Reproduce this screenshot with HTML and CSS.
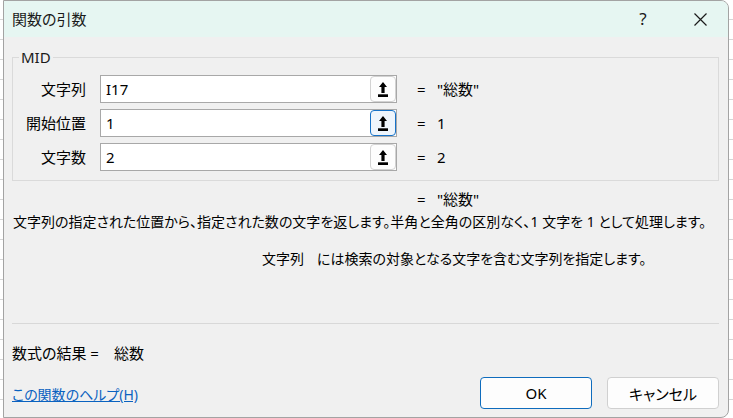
FILE: index.html
```html
<!DOCTYPE html>
<html lang="ja">

<head>
  <meta charset="UTF-8">
  <meta name="viewport" content="width=device-width, initial-scale=1.0">
  <title>関数の引数</title>
  <link rel="stylesheet" href="styles.css">
</head>

<body>
  <div class="dialog">
    <div class="titlebar">
      <span class="title">関数の引数</span>
      <span class="help">?</span>
      <span class="close">
        <svg width="13" height="13" viewBox="0 0 13 13"><path d="M0.5 0.5 L12.5 12.5 M12.5 0.5 L0.5 12.5" stroke="#1b1b1b" stroke-width="1.2" fill="none"/></svg>
      </span>
    </div>

    <div class="content">
      <fieldset class="group">
        <legend>MID</legend>
        <div class="arg-row">
          <label>文字列</label>
          <div class="ref-input"><span class="value">I17</span><button class="pick"><svg width="10" height="15" viewBox="0 0 10 15"><path d="M5 0 L9 5 L6.6 5 L6.6 11 L3.4 11 L3.4 5 L1 5 Z" fill="#000"/><rect x="0" y="12.3" width="10" height="2.7" fill="#000"/></svg></button></div>
          <span class="eq">=</span>
          <span class="result">"総数"</span>
        </div>
        <div class="arg-row">
          <label>開始位置</label>
          <div class="ref-input"><span class="value">1</span><button class="pick focused"><svg width="10" height="15" viewBox="0 0 10 15"><path d="M5 0 L9 5 L6.6 5 L6.6 11 L3.4 11 L3.4 5 L1 5 Z" fill="#000"/><rect x="0" y="12.3" width="10" height="2.7" fill="#000"/></svg></button></div>
          <span class="eq">=</span>
          <span class="result">1</span>
        </div>
        <div class="arg-row">
          <label>文字数</label>
          <div class="ref-input"><span class="value">2</span><button class="pick"><svg width="10" height="15" viewBox="0 0 10 15"><path d="M5 0 L9 5 L6.6 5 L6.6 11 L3.4 11 L3.4 5 L1 5 Z" fill="#000"/><rect x="0" y="12.3" width="10" height="2.7" fill="#000"/></svg></button></div>
          <span class="eq">=</span>
          <span class="result">2</span>
        </div>
      </fieldset>

      <div class="arg-row total">
        <span></span>
        <span></span>
        <span class="eq">=</span>
        <span class="result">"総数"</span>
      </div>

      <p class="desc">文字列の指定された位置から、指定された数の文字を返します。半角と全角の区別なく、1 文字を 1 として処理します。</p>
      <p class="arg-desc"><span class="arg-name">文字列</span>には検索の対象となる文字を含む文字列を指定します。</p>

      <hr>

      <div class="formula-result">数式の結果 =<span class="formula-value">総数</span></div>

      <div class="footer">
        <a href="#" class="help-link">この関数のヘルプ(H)</a>
        <div class="buttons">
          <button class="btn primary">OK</button>
          <button class="btn">キャンセル</button>
        </div>
      </div>
    </div>
  </div>
</body>

</html>
```

FILE: styles.css
```css
body {
  margin: 0;
  height: 418px;
  overflow: hidden;
  background: #fff repeating-linear-gradient(to bottom, #fff 0, #fff 19px, #d6d6d6 19px, #d6d6d6 20px);
  font-family: "Noto Sans", "Noto Sans CJK JP", sans-serif;
  font-feature-settings: "palt";
  font-size: 15px;
  line-height: 20px;
  color: #000;
}

.dialog {
  margin-left: 3px;
  width: 726px;
  height: 418px;
  box-sizing: border-box;
  border: 1px solid #a3a3a3;
  border-radius: 0 8px 8px 0;
  background: #f0f0f0;
  overflow: hidden;
}

.titlebar {
  height: 36px;
  display: flex;
  align-items: center;
  padding: 0 5px 0 8px;
  background: #e6f6f2;
  color: #1a1a1a;
}

.titlebar .title {
  flex: 1;
}

.titlebar .help,
.titlebar .close {
  width: 46px;
  display: flex;
  justify-content: center;
  align-items: center;
}

.titlebar .help {
  font-size: 17px;
  margin-right: 11px;
}

.content {
  padding: 10px 9px 0 8px;
}

.group {
  margin: 0;
  padding: 8px 0 9px 0;
  border: 1px solid #dadada;
}

.group legend {
  margin-left: 6px;
  padding: 0 2px;
  color: #1a1a1a;
}

.arg-row {
  display: grid;
  grid-template-columns: 87px 317px 20px 1fr;
  align-items: center;
  height: 28px;
}

.arg-row + .arg-row {
  margin-top: 6px;
}

.arg-row label {
  text-align: right;
  padding-right: 14px;
}

.ref-input {
  width: 297px;
  height: 28px;
  box-sizing: border-box;
  border: 1px solid #a8a8a8;
  background: #fff;
  display: flex;
  align-items: center;
}

.ref-input .value {
  flex: 1;
  padding-left: 5px;
}

.pick {
  width: 26px;
  height: 26px;
  box-sizing: border-box;
  padding: 0;
  border: 1px solid #d2d2d2;
  border-radius: 4px;
  background: #fdfdfd;
  display: flex;
  justify-content: center;
  align-items: center;
}

.pick.focused {
  border: 1.5px solid #1672c8;
  background: #eef5fc;
}

.arg-row.total {
  margin: 8px 0 0 1px;
  height: 20px;
}

.desc {
  margin: 3px 0 0 1px;
  font-size: 14px;
  white-space: nowrap;
}

.arg-desc {
  margin: 17px 0 0 250px;
  font-size: 14px;
  white-space: nowrap;
}

.arg-name {
  margin-right: 13px;
}

hr {
  margin: 54px 0 0 0;
  border: 0;
  border-top: 1px solid #d8d8d8;
}

.formula-result {
  margin-top: 19px;
}

.formula-value {
  margin-left: 15px;
}

.footer {
  display: flex;
  justify-content: space-between;
  align-items: center;
  margin-top: 14px;
}

.help-link {
  color: #0a62c0;
  font-size: 14px;
  text-decoration: underline;
  margin-top: 3px;
}

.buttons {
  display: flex;
  gap: 15px;
}

.btn {
  width: 112px;
  height: 32px;
  box-sizing: border-box;
  border: 1px solid #d0d0d0;
  border-radius: 4px;
  background: #fdfdfd;
  font-family: "Noto Sans", "Noto Sans CJK JP", sans-serif;
  font-feature-settings: "palt";
  font-size: 15px;
  color: #000;
}

.btn.primary {
  border-color: #0f6cbd;
}
```
